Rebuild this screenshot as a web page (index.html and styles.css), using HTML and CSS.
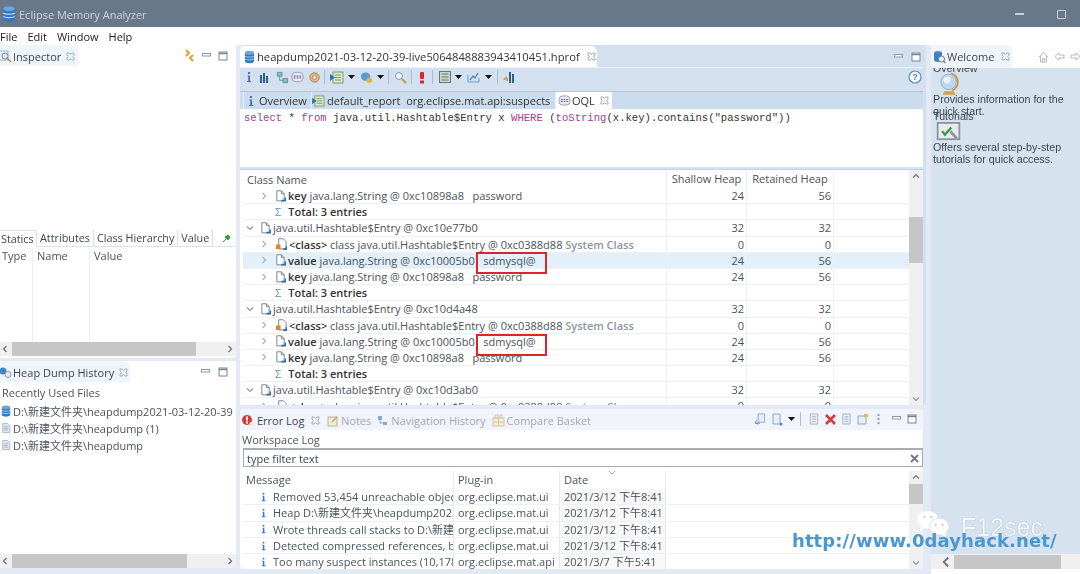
FILE: index.html
```html
<!DOCTYPE html>
<html lang="en">
<head>
<meta charset="utf-8">
<title>Eclipse Memory Analyzer</title>
<link rel="stylesheet" href="styles.css">
</head>
<body>
<svg class="defs" width="0" height="0">
  <defs>
    <symbol id="db" viewBox="0 0 12 14"><ellipse cx="6" cy="2.500" rx="5" ry="2.200" fill="#6aa5de"/><path d="M1 2.500v9c0 1.200 2.200 2.200 5 2.200s5-1 5-2.200v-9c0 1.200-2.200 2.200-5 2.200s-5-1-5-2.200z" fill="#2f78c4"/><path d="M1 6c1 1.500 9 1.500 10 0M1 9c1 1.500 9 1.500 10 0" stroke="#bcd8f2" fill="none"/></symbol>
    <symbol id="doc" viewBox="0 0 12 13"><path d="M2 .8h5l3 3v8H2z" fill="#fff" stroke="#6e7f93"/><path d="M7 1v3h3" fill="none" stroke="#6e7f93"/><path d="M7 11.500h4.500V8" stroke="#2a6fb0" stroke-width="2" fill="none"/></symbol>
    <symbol id="cls" viewBox="0 0 13 13"><path d="M4 .8h5l3 3v8H4z" fill="#fff" stroke="#6e7f93"/><rect x="1" y="7" width="5" height="5" fill="#d68b2f"/><path d="M9 12h3.500V9" stroke="#2a6fb0" stroke-width="2" fill="none"/></symbol>
    <symbol id="file" viewBox="0 0 12 13"><path d="M2 1h6l2.500 2.500V12H2z" fill="#dfe8f2" stroke="#9fb2c6"/><path d="M3.500 5h5M3.500 7h5M3.500 9h5" stroke="#9fb2c6"/></symbol>
    <symbol id="min" viewBox="0 0 10 8"><rect x=".5" y="1.500" width="8" height="2.500" fill="#fff" stroke="#8e99a6"/></symbol>
    <symbol id="max" viewBox="0 0 10 10"><rect x="1" y="1" width="8" height="8" fill="#fff" stroke="#79838f"/><path d="M1 2.500h8" stroke="#79838f" stroke-width="1.500"/></symbol>
    <symbol id="x" viewBox="0 0 9 9"><path d="M1 1h2l1.500 1.500L6 1h2v2L6.500 4.500 8 6v2H6L4.500 6.500 3 8H1V6l1.500-1.500L1 3z" fill="none" stroke="#a3adb9"/></symbol>
    <symbol id="arrow" viewBox="0 0 8 8"><path d="M2.500 1l3 3-3 3" fill="none" stroke="#a9b2bc" stroke-width="1.200"/></symbol>
    <symbol id="down" viewBox="0 0 8 8"><path d="M1 2.500l3 3 3-3" fill="none" stroke="#8e98a3" stroke-width="1.200"/></symbol>
    <symbol id="up" viewBox="0 0 8 8"><path d="M1 5.500l3-3 3 3" fill="none" stroke="#6e7680" stroke-width="1.200"/></symbol>
    <symbol id="left" viewBox="0 0 8 8"><path d="M5.500 1l-3 3 3 3" fill="none" stroke="#6e7680" stroke-width="1.300"/></symbol>
    <symbol id="right" viewBox="0 0 8 8"><path d="M2.500 1l3 3-3 3" fill="none" stroke="#6e7680" stroke-width="1.300"/></symbol>
    <symbol id="info" viewBox="0 0 6 12"><rect x="2" y="1" width="2" height="2" fill="#3f73bd"/><path d="M1.500 4.500H4v5.500h1.200v1H1v-1h1.200V5.500H1.500z" fill="#3f73bd"/></symbol>
    <symbol id="tree" viewBox="0 0 14 14"><path d="M1.500 1.500h5v4h-5zM7.500 8h5v4.500h-5z" fill="#8ac3a0" stroke="#5b8fb0"/><path d="M4 5.500V10h3.500" fill="none" stroke="#5b8fb0"/></symbol>
    <symbol id="rep" viewBox="0 0 14 13"><rect x="3" y="1" width="10" height="11" fill="#dcebc8" stroke="#7d9b6b"/><path d="M5 4h6M5 6.500h6M5 9h6" stroke="#7d9b6b"/><path d="M0 3l5 3.500L0 10z" fill="#2b78b8"/></symbol>
    <symbol id="drop" viewBox="0 0 7 4"><path d="M0 0h7L3.500 4z" fill="#111"/></symbol>
    <symbol id="oql" viewBox="0 0 14 12"><rect x="1" y="1" width="12" height="10" rx="4" fill="#e8e8f2" stroke="#9a9ab0"/><path d="M3 5h8M3 7h8" stroke="#4a5a7a" stroke-dasharray="2 1"/></symbol>
    <symbol id="gear" viewBox="0 0 14 14"><circle cx="7" cy="7" r="5" fill="#e6b982" stroke="#a07a4a"/><circle cx="7" cy="7" r="2" fill="#fff" stroke="#a07a4a"/></symbol>
    <symbol id="page" viewBox="0 0 12 13"><path d="M2 1h8v11H2z" fill="#e9eff7" stroke="#9fb2c6"/><path d="M4 4h4M4 6.500h4M4 9h4" stroke="#9fb2c6"/></symbol>
  </defs>
</svg>

<div class="window">
  <header class="titlebar">
    <svg class="title-icon" width="14" height="16"><use href="#db"/></svg>
    <span class="title-text">Eclipse Memory Analyzer</span>
    <span class="win-min"></span>
    <span class="win-max"></span>
  </header>
  <nav class="menubar"><span>File</span><span>Edit</span><span>Window</span><span>Help</span></nav>

  <main class="workbench">
    <section class="col-left">
      <div class="panel inspector">
        <div class="viewtabs">
          <div class="vtab vtab-inspector"><svg width="13" height="13" viewBox="0 0 13 13" class="ico"><rect x="0" y="1" width="9" height="9" fill="#eef2f7" stroke="#9fb2c6"/><circle cx="6" cy="6" r="3" fill="#dfeafa" stroke="#7d8a99"/><path d="M8.500 8.500l3.500 3.500" stroke="#b18a4a" stroke-width="1.500"/></svg><span>Inspector</span><svg class="close" width="9" height="9"><use href="#x"/></svg></div>
          <div class="view-actions">
            <svg width="13" height="13" viewBox="0 0 13 13"><path d="M3 1l3 3-3 3M10 6l-3 3 3 3" fill="none" stroke="#e0a030" stroke-width="2"/></svg>
            <svg width="10" height="8"><use href="#min"/></svg>
            <svg width="10" height="10"><use href="#max"/></svg>
          </div>
        </div>
        <div class="insp-space"></div>
        <div class="insp-tabs">
          <span class="itab itab-on">Statics</span><span class="itab">Attributes</span><span class="itab">Class Hierarchy</span><span class="itab">Value</span>
          <svg class="pin" width="9" height="9" viewBox="0 0 9 9"><path d="M1 8l3-3M3 3l3-2 2 2-2 3z" fill="#3b9a3b" stroke="#3b9a3b"/></svg>
        </div>
        <div class="insp-head"><span class="ih-type">Type</span><span class="ih-name">Name</span><span class="ih-value">Value</span></div>
        <div class="hscroll insp-scroll"><svg width="8" height="8"><use href="#left"/></svg><div class="hthumb insp-thumb"></div><svg width="8" height="8"><use href="#right"/></svg></div>
      </div>
      <div class="panel history">
        <div class="viewtabs">
          <div class="vtab vtab-history"><svg width="13" height="13" viewBox="0 0 13 13" class="ico"><circle cx="4" cy="5" r="3.500" fill="#3f86c9"/><circle cx="9" cy="8.500" r="3" fill="#e8edf2" stroke="#8a98a8"/></svg><span>Heap Dump History</span><svg class="close" width="9" height="9"><use href="#x"/></svg></div>
          <div class="view-actions history-actions">
            <svg width="10" height="8"><use href="#min"/></svg>
            <svg width="10" height="10"><use href="#max"/></svg>
          </div>
        </div>
        <div class="hist-body">
          <div class="hist-title">Recently Used Files</div>
          <div class="hist-row"><svg width="10" height="12"><use href="#db"/></svg><span>D:\新建文件夹\heapdump2021-03-12-20-39</span></div>
          <div class="hist-row"><svg width="10" height="12"><use href="#file"/></svg><span>D:\新建文件夹\heapdump (1)</span></div>
          <div class="hist-row"><svg width="10" height="12"><use href="#file"/></svg><span>D:\新建文件夹\heapdump</span></div>
        </div>
        <div class="hscroll hist-scroll"><svg width="8" height="8"><use href="#left"/></svg><div class="hthumb hist-thumb"></div><svg width="8" height="8"><use href="#right"/></svg></div>
      </div>
    </section>

    <section class="col-center">
      <div class="editor">
        <div class="edit-tabs">
          <div class="etab"><svg width="11" height="14"><use href="#db"/></svg><span>heapdump2021-03-12-20-39-live5064848883943410451.hprof</span><svg class="close" width="9" height="9"><use href="#x"/></svg></div>
          <div class="edit-actions"><svg width="10" height="8"><use href="#min"/></svg><svg width="10" height="10"><use href="#max"/></svg></div>
        </div>
        <div class="toolbar">
          <svg width="6" height="12"><use href="#info"/></svg>
          <svg class="m7" width="10" height="11" viewBox="0 0 10 11"><path d="M1 3h2v8H1zM4 1h2v10H4zM7 4h2v7H7z" fill="#2c5f92"/></svg>
          <svg class="m7" width="13" height="13"><use href="#tree"/></svg>
          <svg class="m2" width="13" height="12"><use href="#oql"/></svg>
          <svg class="m4" width="13" height="13"><use href="#gear"/></svg>
          <i class="sep m3"></i>
          <svg class="m5" width="14" height="13"><use href="#rep"/></svg>
          <svg class="m4" width="7" height="4"><use href="#drop"/></svg>
          <svg class="m5" width="13" height="13" viewBox="0 0 14 14"><ellipse cx="6" cy="6" rx="5" ry="4.500" fill="#5b9bd5"/><circle cx="10" cy="10" r="3" fill="#e3b341"/></svg>
          <svg class="m4" width="7" height="4"><use href="#drop"/></svg>
          <i class="sep m4"></i>
          <svg class="m5" width="13" height="13" viewBox="0 0 13 13"><circle cx="5" cy="5" r="3.500" fill="#eef5fb" stroke="#8d98a5"/><path d="M8 8l4 4" stroke="#c09a50" stroke-width="2"/></svg>
          <i class="sep m4"></i>
          <svg class="m7" width="6" height="13" viewBox="0 0 6 13"><rect x="1" y="1" width="4" height="7" rx="1" fill="#d9262b"/><rect x="1" y="9.500" width="4" height="3" fill="#d9262b"/></svg>
          <i class="sep m7"></i>
          <svg class="m6" width="12" height="12" viewBox="0 0 12 12"><rect x=".5" y=".5" width="11" height="11" fill="#cdd8c8" stroke="#5f7a78"/><path d="M2.500 3h7M2.500 6h7M2.500 9h7" stroke="#5f7a78"/></svg>
          <svg class="m4" width="7" height="4"><use href="#drop"/></svg>
          <svg class="m5" width="13" height="12" viewBox="0 0 13 12"><path d="M1 4v7h11V7" fill="none" stroke="#6d9bd0"/><path d="M3 9l3-4 2 2 3-5" fill="none" stroke="#4f88c6" stroke-width="1.300"/></svg>
          <svg class="m5" width="7" height="4"><use href="#drop"/></svg>
          <i class="sep m5"></i>
          <svg class="m5" width="12" height="13" viewBox="0 0 12 13"><path d="M6 1h2v11H6zM9 3h2v9H9z" fill="#2c5f92"/><path d="M0 8l4-3v2h1v3H3v-1H1z" fill="#d8a63a"/></svg>
          <svg class="help" width="14" height="14" viewBox="0 0 14 14"><circle cx="7" cy="7" r="6" fill="#fff" stroke="#4f8fc9" stroke-width="1.200"/><text x="7" y="10.300" text-anchor="middle" font-size="9" font-weight="700" font-family="Liberation Sans" fill="#3d7fb8">?</text></svg>
        </div>
        <div class="inner-tabs">
          <div class="itb itb-over"><svg width="6" height="12"><use href="#info"/></svg><span>Overview</span></div>
          <div class="itb itb-rep"><svg width="13" height="12"><use href="#rep"/></svg><span>default_report&nbsp; org.eclipse.mat.api:suspects</span></div>
          <div class="itb itb-on"><svg width="13" height="11"><use href="#oql"/></svg><span>OQL</span><svg class="close" width="9" height="9"><use href="#x"/></svg></div>
        </div>
        <div class="query"><span class="kw">select</span> * <span class="kw">from</span> java.util.Hashtable$Entry x <span class="kw">WHERE</span> (<span class="kw">toString</span>(x.key).contains("password"))</div>
        <div class="results">
          <div class="grid">
            <div class="row head"><div class="c-name head-name">Class Name</div><div class="c-num head-c">Shallow Heap</div><div class="c-ret head-c">Retained Heap</div><div class="c-fill"></div></div>
            <div class="body-rows">
              <div class="row"><div class="c-name l2"><svg class="tw" width="8" height="8"><use href="#arrow"/></svg><svg class="ti" width="11" height="12"><use href="#doc"/></svg><b>key</b> java.lang.String @ 0xc10898a8&nbsp;&nbsp; password</div><div class="c-num">24</div><div class="c-ret">56</div><div class="c-fill"></div></div>
              <div class="row"><div class="c-name l3"><span class="sig">Σ</span><b>Total: 3 entries</b></div><div class="c-num"></div><div class="c-ret"></div><div class="c-fill"></div></div>

              <div class="row"><div class="c-name l1"><svg class="tw" width="8" height="8"><use href="#down"/></svg><svg class="ti" width="11" height="12"><use href="#doc"/></svg>java.util.Hashtable$Entry @ 0xc10e77b0</div><div class="c-num">32</div><div class="c-ret">32</div><div class="c-fill"></div></div>
              <div class="row"><div class="c-name l2"><svg class="tw" width="8" height="8"><use href="#arrow"/></svg><svg class="ti" width="12" height="12"><use href="#cls"/></svg><b>&lt;class&gt;</b> class java.util.Hashtable$Entry @ 0xc0388d88 <b class="sys">System Class</b></div><div class="c-num">0</div><div class="c-ret">0</div><div class="c-fill"></div></div>
              <div class="row sel"><div class="c-name l2"><svg class="tw" width="8" height="8"><use href="#arrow"/></svg><svg class="ti" width="11" height="12"><use href="#doc"/></svg><b>value</b> java.lang.String @ 0xc10005b0&nbsp;&nbsp; sdmysql@</div><div class="c-num">24</div><div class="c-ret">56</div><div class="c-fill"></div></div>
              <div class="row"><div class="c-name l2"><svg class="tw" width="8" height="8"><use href="#arrow"/></svg><svg class="ti" width="11" height="12"><use href="#doc"/></svg><b>key</b> java.lang.String @ 0xc10898a8&nbsp;&nbsp; password</div><div class="c-num">24</div><div class="c-ret">56</div><div class="c-fill"></div></div>
              <div class="row"><div class="c-name l3"><span class="sig">Σ</span><b>Total: 3 entries</b></div><div class="c-num"></div><div class="c-ret"></div><div class="c-fill"></div></div>

              <div class="row"><div class="c-name l1"><svg class="tw" width="8" height="8"><use href="#down"/></svg><svg class="ti" width="11" height="12"><use href="#doc"/></svg>java.util.Hashtable$Entry @ 0xc10d4a48</div><div class="c-num">32</div><div class="c-ret">32</div><div class="c-fill"></div></div>
              <div class="row"><div class="c-name l2"><svg class="tw" width="8" height="8"><use href="#arrow"/></svg><svg class="ti" width="12" height="12"><use href="#cls"/></svg><b>&lt;class&gt;</b> class java.util.Hashtable$Entry @ 0xc0388d88 <b class="sys">System Class</b></div><div class="c-num">0</div><div class="c-ret">0</div><div class="c-fill"></div></div>
              <div class="row"><div class="c-name l2"><svg class="tw" width="8" height="8"><use href="#arrow"/></svg><svg class="ti" width="11" height="12"><use href="#doc"/></svg><b>value</b> java.lang.String @ 0xc10005b0&nbsp;&nbsp; sdmysql@</div><div class="c-num">24</div><div class="c-ret">56</div><div class="c-fill"></div></div>
              <div class="row"><div class="c-name l2"><svg class="tw" width="8" height="8"><use href="#arrow"/></svg><svg class="ti" width="11" height="12"><use href="#doc"/></svg><b>key</b> java.lang.String @ 0xc10898a8&nbsp;&nbsp; password</div><div class="c-num">24</div><div class="c-ret">56</div><div class="c-fill"></div></div>
              <div class="row"><div class="c-name l3"><span class="sig">Σ</span><b>Total: 3 entries</b></div><div class="c-num"></div><div class="c-ret"></div><div class="c-fill"></div></div>

              <div class="row"><div class="c-name l1"><svg class="tw" width="8" height="8"><use href="#down"/></svg><svg class="ti" width="11" height="12"><use href="#doc"/></svg>java.util.Hashtable$Entry @ 0xc10d3ab0</div><div class="c-num">32</div><div class="c-ret">32</div><div class="c-fill"></div></div>
              <div class="row"><div class="c-name l2"><svg class="tw" width="8" height="8"><use href="#arrow"/></svg><svg class="ti" width="12" height="12"><use href="#cls"/></svg><b>&lt;class&gt;</b> class java.util.Hashtable$Entry @ 0xc0388d88 <b class="sys">System Class</b></div><div class="c-num">0</div><div class="c-ret">0</div><div class="c-fill"></div></div>
            </div>
          </div>
          <div class="vscroll res-scroll"><svg width="8" height="8"><use href="#up"/></svg><div class="vspace"><div class="vthumb res-thumb"></div></div><svg width="8" height="8"><use href="#down"/></svg></div>
          <div class="redbox rb1"></div>
          <div class="redbox rb2"></div>
        </div>
      </div>

      <div class="logpanel">
        <div class="log-tabs">
          <div class="ltab ltab-on"><svg width="13" height="13" viewBox="0 0 13 13"><circle cx="6" cy="6" r="5" fill="#d9383a"/><rect x="5" y="2.500" width="2" height="4" fill="#fff"/><rect x="5" y="7.500" width="2" height="2" fill="#fff"/><path d="M9 8h3v4H8z" fill="#f0e6c8"/></svg><span>Error Log</span><svg class="close" width="9" height="9"><use href="#x"/></svg></div>
          <div class="ltab"><svg width="12" height="12" viewBox="0 0 12 12"><rect x="1" y="2" width="9" height="9" fill="#f0ecd6" stroke="#b9b59a"/><path d="M5 7l5-5" stroke="#c5a94e" stroke-width="1.500"/></svg><span>Notes</span></div>
          <div class="ltab"><svg width="12" height="12" viewBox="0 0 12 12"><path d="M1 1h4v4H1zM6 7h4v3H6z" fill="#8ea8c8"/><path d="M3 5v3h3" fill="none" stroke="#8ea8c8"/></svg><span>Navigation History</span></div>
          <div class="ltab"><svg width="13" height="13" viewBox="0 0 13 13"><rect x="1" y="4" width="11" height="8" fill="#f5efd8" stroke="#cfc7a5"/><path d="M6.500 4v8M1 8h11" stroke="#cfc7a5"/><path d="M3 1h3v3H3zM8 1h2v3H8z" fill="none" stroke="#cfc7a5"/></svg><span>Compare Basket</span></div>
          <div class="log-actions">
            <svg width="12" height="12" viewBox="0 0 12 13"><path d="M4 1h7v9H4z" fill="#e8eef5" stroke="#8ea8c8"/><path d="M1 11h5M2 8l-1 3 3 1" fill="none" stroke="#4f88c6"/></svg>
            <svg width="12" height="13" viewBox="0 0 12 13"><path d="M2 1h7v10H2z" fill="#e8eef5" stroke="#8ea8c8"/><circle cx="10" cy="11" r="1.500" fill="#4f88c6"/></svg>
            <svg width="7" height="4"><use href="#drop"/></svg>
            <i class="sep sep-log"></i>
            <svg width="12" height="12"><use href="#page"/></svg>
            <svg width="11" height="11" viewBox="0 0 11 11"><path d="M1 1l9 9M10 1l-9 9" stroke="#d9383a" stroke-width="2.600"/></svg>
            <svg width="11" height="12"><use href="#page"/></svg>
            <svg width="12" height="12" viewBox="0 0 12 12"><path d="M1 3h8v8H1z" fill="#e8eef5" stroke="#8ea8c8"/><path d="M7 1h4v3H7z" fill="#e6b94e"/></svg>
            <svg class="dots" width="3" height="12" viewBox="0 0 3 12"><circle cx="1.500" cy="2" r="1.200" fill="#9aa5b1"/><circle cx="1.500" cy="6" r="1.200" fill="#9aa5b1"/><circle cx="1.500" cy="10" r="1.200" fill="#9aa5b1"/></svg>
            <svg width="10" height="8"><use href="#min"/></svg>
            <svg width="10" height="10"><use href="#max"/></svg>
          </div>
        </div>
        <div class="log-title">Workspace Log</div>
        <div class="filter"><span>type filter text</span><svg width="9" height="9" viewBox="0 0 9 9"><path d="M1 1l7 7M8 1l-7 7" stroke="#6f767e" stroke-width="1.800"/></svg></div>
        <div class="log-table">
          <div class="log-grid">
            <div class="lrow lhead"><div class="lm lmh">Message</div><div class="lp">Plug-in</div><div class="ld">Date<svg class="sort" width="8" height="6" viewBox="0 0 8 6"><path d="M1 1l3 3 3-3" fill="none" stroke="#a6aeb7"/></svg></div></div>
            <div class="lrow"><div class="lm"><svg width="5" height="10"><use href="#info"/></svg><span>Removed 53,454 unreachable objects</span></div><div class="lp">org.eclipse.mat.ui</div><div class="ld">2021/3/12 下午8:41</div></div>
            <div class="lrow"><div class="lm"><svg width="5" height="10"><use href="#info"/></svg><span>Heap D:\新建文件夹\heapdump2021-03</span></div><div class="lp">org.eclipse.mat.ui</div><div class="ld">2021/3/12 下午8:41</div></div>
            <div class="lrow"><div class="lm"><svg width="5" height="10"><use href="#info"/></svg><span>Wrote threads call stacks to D:\新建文件夹</span></div><div class="lp">org.eclipse.mat.ui</div><div class="ld">2021/3/12 下午8:41</div></div>
            <div class="lrow"><div class="lm"><svg width="5" height="10"><use href="#info"/></svg><span>Detected compressed references, because</span></div><div class="lp">org.eclipse.mat.ui</div><div class="ld">2021/3/12 下午8:41</div></div>
            <div class="lrow"><div class="lm"><svg width="5" height="10"><use href="#info"/></svg><span>Too many suspect instances (10,178)</span></div><div class="lp">org.eclipse.mat.api</div><div class="ld">2021/3/7 下午5:41</div></div>
          </div>
          <div class="vscroll log-scroll"><svg width="8" height="8"><use href="#up"/></svg><div class="vspace"><div class="vthumb log-thumb"></div></div><svg width="8" height="8"><use href="#down"/></svg></div>
        </div>
      </div>
    </section>

    <section class="col-right">
      <div class="welcome-tabs">
        <div class="wtab"><svg width="13" height="14" viewBox="0 0 13 14"><ellipse cx="5" cy="3" rx="4" ry="2" fill="#4f8fd0"/><path d="M1 3v7c0 1 2 2 4 2s4-1 4-2V3" fill="#3d7fc4"/><circle cx="8.500" cy="9" r="3" fill="#eef3f8" stroke="#6a7a8a"/><path d="M10.500 11l2 2" stroke="#a07a4a" stroke-width="1.500"/></svg><span>Welcome</span><svg class="close" width="9" height="9"><use href="#x"/></svg></div>
        <div class="w-nav">
          <svg width="11" height="12" viewBox="0 0 11 12"><path d="M1 6l4.500-5L10 6M2.500 5v6h6V5M4.500 11V7.500h2V11" fill="none" stroke="#b3bcc6"/></svg>
          <svg width="11" height="9" viewBox="0 0 11 9"><path d="M1 4.500L5 1v2h5v3H5v2z" fill="none" stroke="#b3bcc6"/></svg>
          <svg width="11" height="9" viewBox="0 0 11 9"><path d="M10 4.500L6 1v2H1v3h5v2z" fill="none" stroke="#b3bcc6"/></svg>
        </div>
      </div>
      <div class="welcome">
        <div class="w-sec w-over">
          <div class="w-head">Overview</div>
          <svg class="w-globe" width="19" height="24" viewBox="0 0 22 27"><path d="M13 1c6 2 9 8 7 14-1 3-3 5-6 6" fill="none" stroke="#c9973b" stroke-width="2"/><circle cx="10" cy="11" r="9" fill="#bcd7ee" stroke="#8aa9c4"/><circle cx="8" cy="9" r="4" fill="#e8f3fb"/><path d="M5 22h11l2 4H3z" fill="#d4a047"/></svg>
          <div class="w-desc">Provides information for the quick start.</div>
        </div>
        <div class="w-sec w-tut">
          <div class="w-head">Tutorials</div>
          <svg class="w-board" width="25" height="19" viewBox="0 0 26 21"><rect x="1" y="1" width="24" height="18" fill="#e8eaec" stroke="#8d9399" stroke-width="2"/><path d="M6 10l3 4 7-8" fill="none" stroke="#2f9b3f" stroke-width="2.400"/><path d="M15 10l7 8" stroke="#8d9399" stroke-width="3"/></svg>
          <div class="w-desc">Offers several step-by-step tutorials for quick access.</div>
        </div>
      </div>
      <div class="hscroll w-scroll"><svg width="12" height="12"><use href="#left"/></svg><div class="hthumb w-thumb"></div></div>
    </section>
  </main>

  <div class="watermark">
    <svg class="wechat" width="38" height="28" viewBox="0 0 40 32"><ellipse cx="13" cy="11" rx="12" ry="10" fill="#fff"/><path d="M6 18l-2 6 7-4z" fill="#fff"/><ellipse cx="26" cy="19" rx="11" ry="9.500" fill="#fff" stroke="#d6e3ef"/><path d="M32 26l3 5-7-3z" fill="#fff"/><circle cx="9" cy="8" r="1.300" fill="#c8ccd0"/><circle cx="17" cy="8" r="1.300" fill="#c8ccd0"/><circle cx="22" cy="17" r="1.200" fill="#c8ccd0"/><circle cx="30" cy="17" r="1.200" fill="#c8ccd0"/></svg>
    <span class="wm-name">F12sec</span>
    <span class="wm-link">http://www.0dayhack.net/</span>
  </div>
</div>
</body>
</html>
```
FILE: styles.css
```css
* { box-sizing: border-box; }
html, body { margin: 0; padding: 0; }
body { width: 1080px; height: 574px; overflow: hidden; background: #e3e9f5; font-family: "Open Sans", "Noto Sans CJK SC", sans-serif; font-size: 11px; color: #333; }
svg { display: block; flex: none; }
.defs { position: absolute; }
.window { position: relative; width: 1080px; height: 574px; display: flex; flex-direction: column; filter: blur(0.35px); }

.titlebar { height: 27px; background: #68778a; display: flex; align-items: center; padding: 1px 0 0 2px; flex: none; }
.title-icon { margin-right: 3px; }
.title-text { color: #ccd3dc; font-size: 11px; flex: 1; }
.win-min { width: 9px; height: 1.500px; background: #c9d0d9; margin-right: 33px; }
.win-max { width: 9px; height: 9px; border: 1.500px solid #c9d0d9; border-radius: 1px; margin-right: 14px; }

.menubar { height: 18px; background: #fff; display: flex; align-items: center; gap: 10px; font-size: 11px; color: #222; flex: none; }

.workbench { flex: 1; display: flex; min-height: 0; }
.col-left { width: 236px; display: flex; flex-direction: column; gap: 3px; flex: none; }
.col-center { width: 686px; margin-left: 4px; display: flex; flex-direction: column; gap: 4px; flex: none; }
.col-right { width: 149px; margin-left: 5px; display: flex; flex-direction: column; background: #fff; overflow: hidden; }

.panel { background: #fff; display: flex; flex-direction: column; border-radius: 0 4px 4px 0; }
.inspector { height: 313px; }
.history { flex: 1; margin-bottom: 6px; }
.viewtabs { height: 21px; display: flex; align-items: center; flex: none; background: #fff; }
.vtab { height: 21px; display: flex; align-items: center; padding-top: 2px; background: #f0f4fb; border-radius: 0 6px 0 0; color: #3c4650; font-size: 11px; white-space: nowrap; flex: none; }
.vtab .ico { margin-right: 1px; margin-left: -1px; }
.vtab-inspector { width: 79px; }
.vtab-history { width: 130px; }
.close { margin-left: 5px; }
.view-actions { margin-left: auto; display: flex; align-items: center; gap: 6px; padding-right: 8px; }
.history-actions { gap: 7px; }
.insp-space { flex: 1; }
.insp-tabs { height: 17px; display: flex; align-items: center; border-bottom: 1px solid #dfe3e8; flex: none; }
.itab { height: 17px; line-height: 16px; padding: 0 3px; border-right: 1px solid #dcdfe3; color: #3c4650; font-size: 10.800px; white-space: nowrap; }
.itab-on { width: 37px; background: #fff; border: 1px solid #dcdfe3; border-bottom: 0; border-left: 0; border-radius: 0 2px 0 0; line-height: 15px; padding: 0 0 0 1px; }
.pin { margin-left: 9px; }
.insp-head { height: 95px; display: flex; color: #4a535c; font-size: 11px; line-height: 18px; flex: none; }
.ih-type { width: 33px; padding-left: 2px; border-right: 1px solid #eaf0f8; }
.ih-name { width: 57px; padding-left: 4px; border-right: 1px solid #eaf0f8; }
.ih-value { padding-left: 4px; }
.hscroll { background: #f0f0f0; display: flex; align-items: center; flex: none; }
.insp-scroll { height: 14px; padding: 0 2px 0 1px; justify-content: space-between; margin-bottom: 2px; }
.hthumb { background: #c6c6c6; height: 100%; }
.insp-thumb { width: 184px; margin-right: auto; margin-left: 3px; }
.hist-body { flex: 1; padding: 2px 0 0 2px; font-size: 11px; color: #4a535c; }
.hist-title { height: 18px; line-height: 18px; }
.hist-row { height: 17px; display: flex; align-items: center; gap: 2px; white-space: nowrap; overflow: hidden; margin-left: -1px; }
.hist-scroll { height: 14px; padding: 0 2px 0 1px; }
.hist-thumb { width: 175px; margin-left: 3px; margin-right: auto; }

.editor { height: 360px; background: #d2e0f0; display: flex; flex-direction: column; border-radius: 4px 4px 0 0; flex: none; padding: 1px 0 0 0; }
.edit-tabs { height: 21px; display: flex; flex: none; align-items: center; }
.etab { width: 357px; height: 21px; background: #fff; border-radius: 4px 6px 0 0; display: flex; align-items: center; padding-left: 4px; gap: 2px; font-size: 11.200px; color: #333; white-space: nowrap; }
.etab .close { margin-left: 5px; }
.edit-actions { margin-left: auto; display: flex; gap: 7px; padding-right: 5px; align-items: center; }
.toolbar { height: 24px; margin-right: 3px; display: flex; align-items: center; padding: 0 0 5px 6px; background: #d2e0f0; border-top: 1px solid #eef3fa; flex: none; }
.m2 { margin-left: 2px; }
.m3 { margin-left: 3px; }
.m4 { margin-left: 4px; }
.m5 { margin-left: 5px; }
.m6 { margin-left: 6px; }
.m7 { margin-left: 7px; }
.sep { width: 1px; height: 14px; background: #aebccb; }
.help { margin-left: auto; margin-right: 1px; }
.inner-tabs { height: 18px; display: flex; background: #cbdcee; margin-right: 3px; padding-left: 3px; border-top: 1px solid #bcc6d0; flex: none; }
.itb { display: flex; align-items: center; gap: 5px; font-size: 11px; color: #333; padding-left: 4px; height: 17px; border-left: 1px solid #e9eef5; white-space: nowrap; flex: none; }
.itb-over { width: 68px; }
.itb-rep { gap: 2px; padding-left: 0; width: 244px; }
.itb-on { background: #fff; padding: 0 2px; gap: 1px; width: 57px; }
.itb-on .close { margin-left: 4px; }
.query { height: 58px; background: #fff; margin-right: 3px; padding: 2px 0 0 4px; font-family: "Liberation Mono", monospace; font-size: 10.600px; line-height: 15px; color: #333; flex: none; white-space: nowrap; }
.kw { color: #a3408c; }
.results { position: relative; flex: 1; min-height: 0; margin-right: 3px; margin-top: 2px; padding-left: 3px; background: #fff; display: flex; overflow: hidden; border-top: 1px solid #c4d5e8; }
.grid { width: 666px; flex: none; }
.body-rows { height: 224px; overflow: hidden; }
.row { height: 16.200px; display: flex; border-bottom: 1px solid #eef0f2; font-size: 11px; line-height: 15px; white-space: nowrap; color: #4a535c; }
.row b { font-weight: 600; color: #333; }
.row b.sys { color: #8d96a0; }
.head { height: 18px; border: 0; line-height: 17px; }
.sel { background: #e3eff9; }
.c-name { width: 423px; padding-left: 3px; display: flex; align-items: center; gap: 0; white-space: pre; flex: none; overflow: hidden; }
.head-name { padding-left: 4px; }
.c-num { width: 80px; text-align: right; padding-right: 2px; border-left: 1px solid #eef0f2; flex: none; }
.c-ret { width: 87px; text-align: right; padding-right: 2px; border-left: 1px solid #eef0f2; flex: none; }
.head-c { text-align: center; padding-right: 0; }
.c-fill { flex: 1; border-left: 1px solid #eef0f2; }
.l1 { padding-left: 3px; }
.l2 { padding-left: 17px; }
.l3 { padding-left: 32px; }
.tw { margin-right: 7px; }
.l1 .tw { margin-right: 6px; }
.ti { margin-right: 2px; }
.sig { color: #6f8fb5; font-size: 11px; margin-right: 7px; }
.vscroll { width: 14px; background: #f0f0f0; display: flex; flex-direction: column; align-items: center; justify-content: space-between; flex: none; padding: 2px 0; }
.vspace { flex: 1; width: 100%; padding-top: 37px; }
.vthumb { background: #c6c6c6; width: 100%; }
.res-thumb { height: 46px; }
.redbox { position: absolute; left: 236px; width: 71px; height: 22px; border: 2px solid #e0242c; }
.rb1 { top: 82px; }
.rb2 { top: 164px; }

.logpanel { height: 160px; background: #fff; display: flex; flex-direction: column; flex: none; margin-right: 3px; border-radius: 4px; overflow: hidden; }
.log-tabs { height: 21px; display: flex; align-items: center; background: #f1f4fb; padding: 2px 0 0 1px; flex: none; }
.ltab { height: 19px; display: flex; align-items: center; gap: 2px; color: #a3aab3; font-size: 11px; margin-right: 6px; white-space: nowrap; }
.ltab-on { color: #3c4650; background: #f1f4fb; width: 80px; margin-right: 6px; gap: 3px; }
.ltab-on .close { margin-left: 4px; }
.log-actions { margin-left: auto; display: flex; align-items: center; gap: 5px; padding-right: 6px; margin-top: -3px; }
.sep-log { margin: 0 2px 0 0; }
.dots { margin: 0 7px 0 3px; }
.log-title { height: 17px; line-height: 19px; padding-left: 2px; color: #4a535c; font-size: 11px; flex: none; }
.filter { height: 19px; margin: 1px 0 0 3px; border: 1px solid #a9adb2; border-top-width: 2px; display: flex; align-items: center; justify-content: space-between; padding: 0 3px; font-size: 11px; color: #3c4650; flex: none; }
.log-table { flex: 1; display: flex; min-height: 0; overflow: hidden; padding: 4px 0 0 3px; }
.log-grid { width: 666px; flex: none; }
.lrow { height: 16.300px; display: flex; border-bottom: 1px solid #eef0f2; font-size: 11px; line-height: 15px; white-space: nowrap; color: #4a535c; }
.lhead { height: 18px; border: 0; line-height: 18px; }
.lm { width: 210px; padding-left: 18px; display: flex; align-items: center; gap: 7px; overflow: hidden; flex: none; }
.lmh { padding-left: 3px; }
.lp { width: 106px; padding-left: 4px; border-left: 1px solid #e6e8ea; flex: none; overflow: hidden; }
.ld { width: 107px; padding-left: 4px; border-left: 1px solid #e6e8ea; border-right: 1px solid #e6e8ea; background: #f8f8f8; flex: none; position: relative; }
.lhead .ld { background: #fff; }
.sort { position: absolute; left: 48px; top: -1px; }
.log-scroll { height: 100%; }
.log-thumb { height: 20px; }
.log-scroll .vspace { padding-top: 3px; }

.welcome-tabs { height: 23px; display: flex; align-items: center; flex: none; }
.wtab { width: 81px; height: 23px; background: #f0f4fb; border-radius: 4px 6px 0 0; display: flex; align-items: center; padding-left: 2px; gap: 1px; font-size: 11px; color: #3c4650; flex: none; }
.wtab .close { margin-left: 6px; }
.w-nav { display: flex; align-items: center; gap: 5px; margin-left: 26px; flex: none; }
.welcome { flex: 1; background: #d6e3ef; padding-left: 2px; overflow: hidden; font-family: "Liberation Sans", sans-serif; font-size: 10.700px; color: #3d4650; line-height: 12px; min-height: 0; }
.w-sec { display: flex; flex-direction: column; }
.w-over { margin-top: -6px; height: 48px; }
.w-tut { height: 60px; }
.w-head { height: 12px; white-space: nowrap; flex: none; }
.w-globe { margin: -2px 0 0 7px; }
.w-desc { margin-top: -3px; flex: none; }
.w-tut .w-desc { margin-top: 0; }
.w-board { margin: 0 0 0 3px; }
.w-scroll { height: 15px; padding-left: 9px; background: #f0f0f0; flex: none; margin-bottom: 5px; }
.w-thumb { width: 107px; margin-left: 2px; height: 14px; }

.watermark { position: absolute; left: 0; top: 0; width: 0; height: 0; }
.wechat { position: absolute; left: 915px; top: 510px; }
.wm-name { position: absolute; left: 961px; top: 513px; font-family: "Liberation Sans", sans-serif; font-size: 25px; color: #f4f7fa; text-shadow: 0 0 1px #7f8f9f; white-space: nowrap; }
.wm-link { position: absolute; left: 792px; top: 530px; font-family: "DejaVu Sans", sans-serif; font-weight: 700; font-size: 18px; letter-spacing: .1px; color: #4a98cf; white-space: nowrap; }
```
